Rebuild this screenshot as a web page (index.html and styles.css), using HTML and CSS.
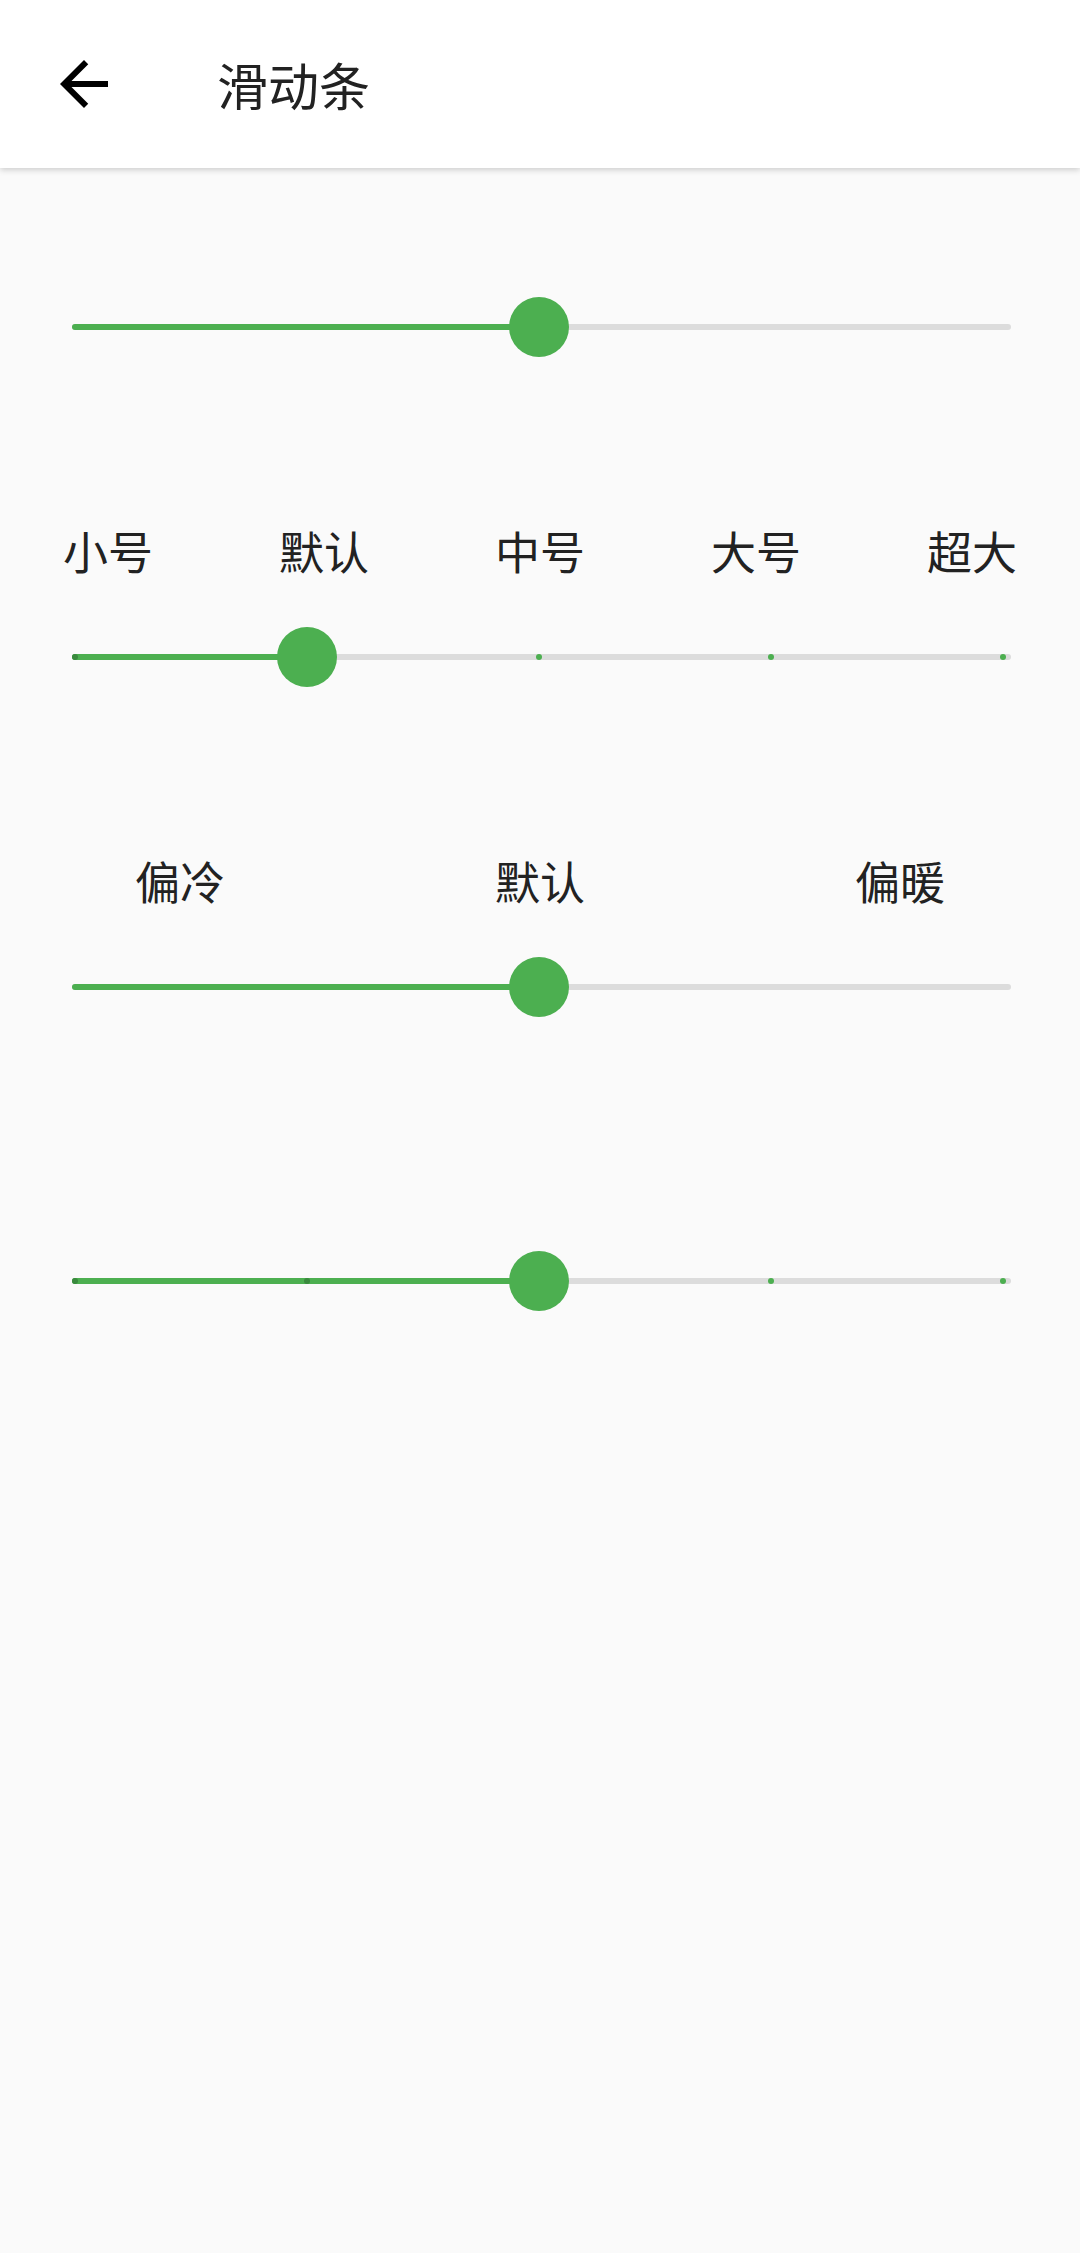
FILE: index.html
```html
<!DOCTYPE html>
<html lang="zh">
<head>
<meta charset="utf-8">
<title>滑动条</title>
<link rel="stylesheet" href="styles.css">
</head>
<body>
<header class="appbar">
  <svg class="back" viewBox="0 0 24 24" width="72" height="72" aria-hidden="true">
    <path d="M20 11H7.83l5.59-5.59L12 4l-8 8 8 8 1.41-1.41L7.83 13H20v-2z"/>
  </svg>
  <h1 class="title">滑动条</h1>
</header>
<main class="content">
  <section class="block block-first">
    <div class="slider">
      <div class="track"><div class="fill" style="width:50.3%"></div></div>
      <div class="rail">
        <span class="thumb" style="left:50%"></span>
      </div>
    </div>
  </section>

  <section class="block block-labeled">
    <div class="labels labels-5">
      <span>小号</span><span>默认</span><span>中号</span><span>大号</span><span>超大</span>
    </div>
    <div class="slider">
      <div class="track"><div class="fill" style="width:25.2%"></div></div>
      <div class="rail">
        <span class="tick on" style="left:0%"></span>
        <span class="tick" style="left:50%"></span>
        <span class="tick" style="left:75%"></span>
        <span class="tick" style="left:100%"></span>
        <span class="thumb" style="left:25%"></span>
      </div>
    </div>
  </section>

  <section class="block block-labeled">
    <div class="labels labels-3">
      <span>偏冷</span><span>默认</span><span>偏暖</span>
    </div>
    <div class="slider">
      <div class="track"><div class="fill" style="width:50.3%"></div></div>
      <div class="rail">
        <span class="thumb" style="left:50%"></span>
      </div>
    </div>
  </section>

  <section class="block block-last">
    <div class="slider">
      <div class="track"><div class="fill" style="width:50.3%"></div></div>
      <div class="rail">
        <span class="tick on" style="left:0%"></span>
        <span class="tick on" style="left:25%"></span>
        <span class="tick" style="left:75%"></span>
        <span class="tick" style="left:100%"></span>
        <span class="thumb" style="left:50%"></span>
      </div>
    </div>
  </section>
</main>
</body>
</html>
```
FILE: styles.css
```css
html, body {
  margin: 0;
  padding: 0;
}
body {
  width: 1080px;
  min-height: 2253px;
  background: #fafafa;
  font-family: "Noto Sans CJK SC", "Noto Sans", Roboto, sans-serif;
  color: #222222;
}
.appbar {
  height: 168px;
  background: #ffffff;
  display: flex;
  align-items: center;
  box-shadow: 0 2px 6px rgba(0, 0, 0, 0.18);
  position: relative;
  z-index: 1;
}
.back {
  margin-left: 48px;
  fill: #000000;
  flex: none;
}
.title {
  margin: 0 0 0 97px;
  font-size: 51px;
  font-weight: 400;
  line-height: 1;
  color: #222222;
}
.content {
  display: flex;
  flex-direction: column;
}
.block-first {
  margin-top: 129px;
}
.block-labeled {
  margin-top: 167px;
}
.block-last {
  margin-top: 234px;
}
.labels {
  display: grid;
  font-size: 45px;
  line-height: 54px;
  height: 54px;
  text-align: center;
  margin-bottom: 49px;
}
.labels-5 {
  grid-template-columns: repeat(5, 1fr);
}
.labels-3 {
  grid-template-columns: repeat(3, 1fr);
}
.slider {
  position: relative;
  margin: 0 69px 0 72px;
  padding: 27px 0;
}
.track {
  height: 6px;
  border-radius: 3px;
  background: #dcdcdc;
  overflow: hidden;
}
.fill {
  height: 100%;
  background: #4caf50;
}
.rail {
  position: absolute;
  left: 3px;
  right: 8px;
  top: 30px;
  height: 0;
}
.tick {
  position: absolute;
  top: 0;
  width: 6px;
  height: 6px;
  border-radius: 50%;
  background: #4caf50;
  transform: translate(-50%, -50%);
}
.tick.on {
  background: #3a8a3e;
}
.thumb {
  position: absolute;
  top: 0;
  width: 60px;
  height: 60px;
  border-radius: 50%;
  background: #4caf50;
  transform: translate(-50%, -50%);
}
```
